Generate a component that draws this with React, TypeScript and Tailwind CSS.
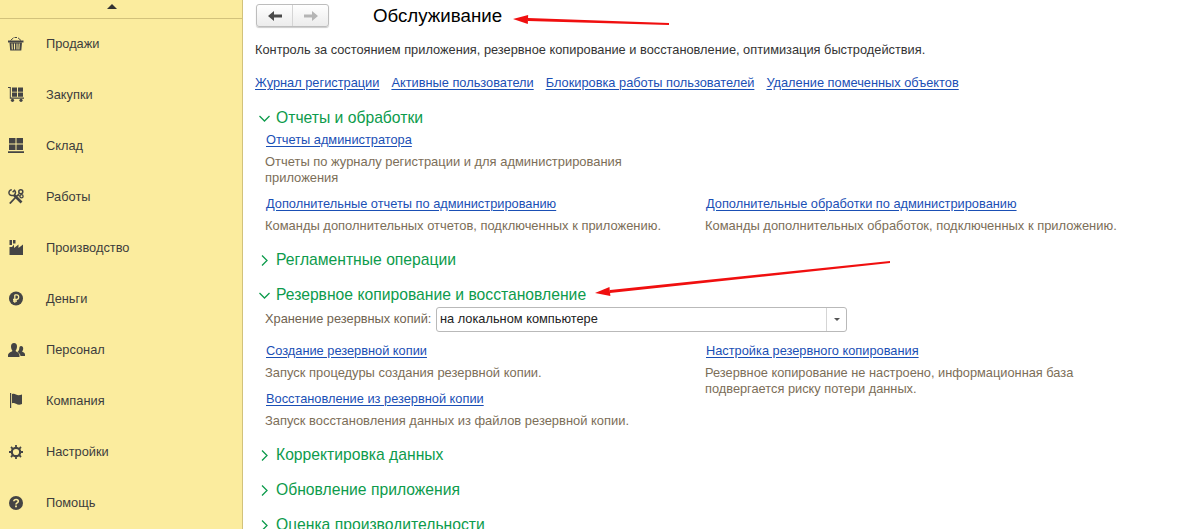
import { ReactNode } from 'react';

const d = 'M';

function IconBasket() {
  return (
    <svg width="16" height="14" viewBox="0 0 16 14" fill="#444">
      <path d="M0 3.500h15.500v2H0z" />
      <path d="M1.500 5.500h12.500l-.7 8H2.200zM3.500 6.500l.3 6h1l-.3-6zm2.500 0v6h1v-6zm2.500 0v6h1v-6zm2.200 0-.3 6h1l.3-6z" fillRule="evenodd" />
      <path d="M2.500 3.500 5.500.800M13 3.500 10 .800M6.500.500h2.500" fill="none" stroke="#444" strokeWidth="1" />
    </svg>
  );
}

function IconCart() {
  return (
    <svg width="16" height="15" viewBox="0 0 16 15" fill="#444">
      <path d="M0 0h2.800v10.500H16v1.200H1.800V1H0z" />
      <path d="M4 .500h5v4.200H4zM10 .500h5v4.200h-5zM4 5.500h5v4.200H4zM10 5.500h5v4.200h-5z" />
      <circle cx="4.500" cy="13.300" r="1.600" />
      <circle cx="13" cy="13.300" r="1.600" />
    </svg>
  );
}

function IconWarehouse() {
  return (
    <svg width="16" height="15" viewBox="0 0 16 15" fill="#444">
      <path d="M1 0h6.500v5.500H1zM8.500 0H15v5.500H8.500zM1 6.500h6.500V12H1zM8.500 6.500H15V12H8.500zM0 13.200h16V15H0z" />
    </svg>
  );
}

function IconTools() {
  return (
    <svg width="16" height="15" viewBox="0 0 16 15" fill="none" stroke="#444">
      <path d="M6 6 13.500 13.500" strokeWidth="2.600" />
      <path d="M3.800.800C1.500 1 .500 2.800 1.200 4.800c1.200 2 3.800 2.300 5.300 1 1.200-1.300 1-3.300 0-4.500L4.600 3.200" strokeWidth="1.500" />
      <path d="M1.800 14.500 9.800 6" strokeWidth="1.800" />
      <circle cx="12.800" cy="2.800" r="2" strokeWidth="1.500" />
      <circle cx="13.500" cy="7.200" r="1.600" strokeWidth="1.300" />
      <path d="M9.500 6.300 11.500 4.300M10 6.500 12 7" strokeWidth="1.200" />
    </svg>
  );
}

function IconFactory() {
  return (
    <svg width="16" height="15" viewBox="0 0 16 15" fill="#444">
      <path d="M1.500 0h2.500v5H1.500zM5 0h2.500v3.500H5zM1.500 7h2.500l2-2.500v3.500L10.500 4.500v3.500L15 4.500V15H1.500z" />
    </svg>
  );
}

function IconRuble() {
  return (
    <svg width="16" height="15" viewBox="0 0 16 15">
      <circle cx="8" cy="7.500" r="7" fill="#444" />
      <path d="M6.800 3.800v8M5 8.300h3.800c2.500 0 2.500-4.500 0-4.500H6.800M5 10h4" fill="none" stroke="#fbec9e" strokeWidth="1.300" />
    </svg>
  );
}

function IconPeople() {
  return (
    <svg width="17" height="14" viewBox="0 0 17 14" fill="#444">
      <path d="M6 0c2 0 3 1.500 3 3.500S8 7 7.500 8c1 1 4 1.500 4 4.500V14H0v-1.500C0 9.500 3.500 9 4.500 8 4 7 3 5.500 3 3.500S4 0 6 0z" />
      <path d="M13 3c1.500 0 2.200 1 2.200 2.500S14.500 8 14 8.500c.8.500 3 1 3 3V13h-4.500c0-2-1.500-3-3-4 1-1 2-2.500 1.800-4C11.500 3.800 12 3 13 3z" />
    </svg>
  );
}

function IconFlag() {
  return (
    <svg width="16" height="15" viewBox="0 0 16 15" fill="#444">
      <path d="M2 0h1.200v15H2z" />
      <path d="M4 1c1.500-.5 2.500-.5 4 .5s3.500 1 6 0v9.500c-2.500 1-4 .8-6-.2s-2.500-1-4-.5z" />
    </svg>
  );
}

function IconGear() {
  return (
    <svg width="16" height="14" viewBox="0 0 16 14" fill="none" stroke="#444">
      <circle cx="8" cy="7" r="4.200" strokeWidth="2.200" />
      <path d="M8 0v2.500M8 14v-2.500M1 7h2.500M15 7h-2.500M3 2l1.800 1.800M13 2l-1.800 1.800M13 12l-1.800-1.800M3 12l1.800-1.800" strokeWidth="1.800" />
    </svg>
  );
}

function IconHelp() {
  return (
    <svg width="16" height="14" viewBox="0 0 16 14">
      <circle cx="8" cy="7" r="7" fill="#444" />
      <path d="M5.800 5.300C6 2.800 10.300 2.900 10.300 5.200c0 1.700-2.300 1.700-2.300 3.300" fill="none" stroke="#fbec9e" strokeWidth="1.600" />
      <path d="M7.100 9.600h1.800v1.700H7.100z" fill="#fbec9e" />
    </svg>
  );
}

const menu: [string, ReactNode][] = [
  ['Продажи', <IconBasket />],
  ['Закупки', <IconCart />],
  ['Склад', <IconWarehouse />],
  ['Работы', <IconTools />],
  ['Производство', <IconFactory />],
  ['Деньги', <IconRuble />],
  ['Персонал', <IconPeople />],
  ['Компания', <IconFlag />],
  ['Настройки', <IconGear />],
  ['Помощь', <IconHelp />],
];

function Link({ children }: { children: ReactNode }) {
  return <a className="text-[#1a4fb5] underline underline-offset-2 decoration-[#1a4fb5]">{children}</a>;
}

function Section({ open, title }: { open?: boolean; title: string }) {
  return (
    <div className="h-[24px] flex items-center gap-[5px] text-[15.700px] text-[#0d9b4c]">
      <svg width="13" height="13" viewBox="0 0 13 13" fill="none" stroke="#0d9b4c" strokeWidth="1.300">
        {open ? <path d="M1.500 4 6.500 9 11.500 4" /> : <path d="M4 1.500 9 6.500 4 11.500" />}
      </svg>
      <span>{title}</span>
    </div>
  );
}

function Arrow({ x1, y1, x2, y2 }: { x1: number; y1: number; x2: number; y2: number }) {
  const a = Math.atan2(y1 - y2, x1 - x2);
  const px = Math.cos(a + Math.PI / 2) * 4.500;
  const py = Math.sin(a + Math.PI / 2) * 4.500;
  const bx = x2 + Math.cos(a) * 15;
  const by = y2 + Math.sin(a) * 15;
  return (
    <g fill="#f00f0f">
      <path d={`${d}${x1} ${y1 - 1}L${bx} ${by - 1.500}L${bx} ${by + 1.500}L${x1} ${y1 + 1}Z`} />
      <path d={`${d}${x2} ${y2}L${bx + px} ${by + py}L${bx - px} ${by - py}Z`} />
    </g>
  );
}

export default function App() {
  return (
    <div className="relative w-[1185px] h-[529px] overflow-hidden flex bg-white text-[12.800px] font-['Liberation_Sans',Arial,sans-serif]">
      {/* Sidebar */}
      <aside className="w-[243px] shrink-0 bg-[#fbec9e] border-r border-[#d2c27b] flex flex-col">
        <div className="h-[19px] shrink-0 border-b border-[#d2c27b] flex justify-center items-center pr-[18px] pb-[6px]">
          <div className="w-0 h-0 border-x-[5px] border-x-transparent border-b-[5px] border-b-[#333]" />
        </div>
        <div className="-mt-px">
          {menu.map(([label, icon]) => (
            <div key={label} className="h-[51px] flex items-center text-[#3d3d3d]">
              <div className="w-[46px] pl-[8px] flex items-center">{icon}</div>
              <span>{label}</span>
            </div>
          ))}
        </div>
      </aside>

      {/* Main */}
      <main className="flex-1 pl-[12px] pt-[4px] text-[#333]">
        <div className="flex items-center h-[23px]">
          <div className="ml-px w-[73px] h-[23px] flex rounded-[3px] border border-[#bdbdbd] bg-gradient-to-b from-white to-[#ececec] shadow-[0_1px_1px_#ccc]">
            <div className="flex-1 flex items-center justify-center border-r border-[#d5d5d5]">
              <svg width="14" height="10" viewBox="0 0 14 10" fill="#4a4a4a"><path d="M0 5 6 0v3.500h8v3H6V10z" /></svg>
            </div>
            <div className="flex-1 flex items-center justify-center">
              <svg width="14" height="10" viewBox="0 0 14 10" fill="#b5b5b5"><path d="M14 5 8 0v3.500H0v3h8V10z" /></svg>
            </div>
          </div>
          <h1 className="ml-[44px] text-[18.700px] leading-[23px] text-black">Обслуживание</h1>
        </div>
        <p className="mt-[16px] leading-[14px]">
          Контроль за состоянием приложения, резервное копирование и восстановление, оптимизация быстродействия.
        </p>
        <div className="mt-[19px] leading-[14px] flex gap-[12px]">
          <Link>Журнал регистрации</Link>
          <Link>Активные пользователи</Link>
          <Link>Блокировка работы пользователей</Link>
          <Link>Удаление помеченных объектов</Link>
        </div>

        <div className="mt-[16px] pl-[3px]">
          <Section open title="Отчеты и обработки" />
        </div>
        <div className="pl-[11px] leading-[16px]">
          <div className="mt-[2px]"><Link>Отчеты администратора</Link></div>
          <p className="mt-[6px] -ml-px w-[370px] text-[12.930px] text-[#7c6e58]">
            Отчеты по журналу регистрации и для администрирования приложения
          </p>
          <div className="mt-[10px] grid grid-cols-[440px_1fr]">
            <div>
              <Link>Дополнительные отчеты по администрированию</Link>
              <p className="mt-[6px] -ml-px text-[12.930px] text-[#7c6e58]">Команды дополнительных отчетов, подключенных к приложению.</p>
            </div>
            <div>
              <Link>Дополнительные обработки по администрированию</Link>
              <p className="mt-[6px] -ml-px text-[12.930px] text-[#7c6e58]">Команды дополнительных обработок, подключенных к приложению.</p>
            </div>
          </div>
        </div>

        <div className="mt-[14px] pl-[3px]">
          <Section title="Регламентные операции" />
        </div>
        <div className="mt-[11px] pl-[3px]">
          <Section open title="Резервное копирование и восстановление" />
        </div>
        <div className="pl-[10px] flex items-center h-[24px]">
          <span className="text-[#6f6350] w-[171px] whitespace-nowrap">Хранение резервных копий:</span>
          <div className="w-[411px] h-[25px] flex items-center rounded-[3px] border border-[#b9b9b9] bg-white">
            <span className="flex-1 pl-[3px] text-[#222]">на локальном компьютере</span>
            <div className="w-[20px] h-full border-l border-[#d5d5d5] flex items-center justify-center">
              <div className="w-0 h-0 border-x-[3px] border-x-transparent border-t-[3px] border-t-[#555]" />
            </div>
          </div>
        </div>
        <div className="pl-[11px] leading-[16px] mt-[12px] grid grid-cols-[440px_1fr]">
          <div>
            <Link>Создание резервной копии</Link>
            <p className="mt-[6px] -ml-px text-[12.930px] text-[#7c6e58]">Запуск процедуры создания резервной копии.</p>
            <div className="mt-[10px]"><Link>Восстановление из резервной копии</Link></div>
            <p className="mt-[6px] -ml-px text-[12.930px] text-[#7c6e58]">Запуск восстановления данных из файлов резервной копии.</p>
          </div>
          <div>
            <Link>Настройка резервного копирования</Link>
            <p className="mt-[6px] -ml-px w-[390px] text-[#7c6e58]">
              Резервное копирование не настроено, информационная база подвергается риску потери данных.
            </p>
          </div>
        </div>
        <div className="mt-[14px] pl-[3px] flex flex-col gap-[11px]">
          <Section title="Корректировка данных" />
          <Section title="Обновление приложения" />
          <Section title="Оценка производительности" />
        </div>
      </main>

      {/* Red arrows over the page */}
      <svg className="absolute inset-0 pointer-events-none" width="1185" height="529">
        <Arrow x1={669} y1={24} x2={513} y2={19} />
        <Arrow x1={890} y1={262} x2={595} y2={293} />
      </svg>
    </div>
  );
}
